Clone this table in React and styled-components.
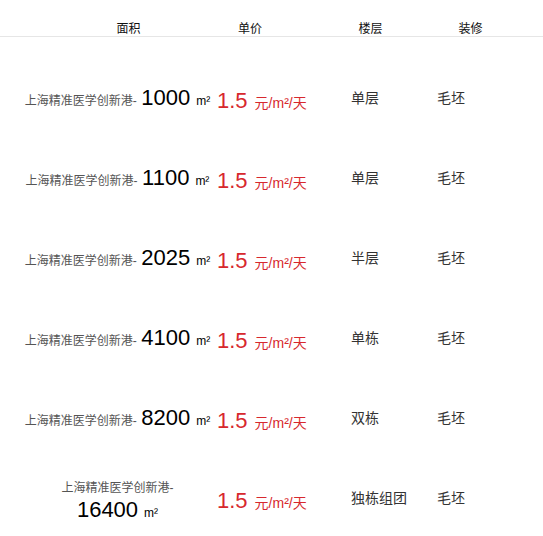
import React from "react";
import styled, { createGlobalStyle } from "styled-components";

const Global = createGlobalStyle`
  html, body { margin: 0; padding: 0; background: #fff; }
  body { font-family: "Liberation Sans", Arial, "Noto Sans CJK SC", sans-serif; }
`;

const Page = styled.div`
  width: 543px;
`;

const Header = styled.div`
  display: grid;
  grid-template-columns: 101px 142px 99px 101px;
  padding-left: 78px;
  height: 37px;
  box-sizing: border-box;
  border-bottom: 1px solid #e6e6e6;
`;

const HeadCell = styled.div`
  text-align: center;
  font-size: 12px;
  line-height: 12px;
  color: #111;
  padding-top: 23px;
`;

const List = styled.div`
  margin-top: 21px;
`;

const Row = styled.div`
  display: grid;
  grid-template-columns: 194px 134px 86px auto;
  padding-left: 23px;
  height: 80px;
  align-items: center;
`;

const AreaCell = styled.div`
  text-align: center;
  color: #000;
  margin-right: 5px;
  padding-top: ${(p) => (p.$wrap ? "6px" : "0")};
`;

const Name = styled.span`
  font-size: 12px;
  color: #555;
`;

const Big = styled.span`
  font-size: 22px;
  line-height: 28px;
`;

const Unit = styled.span`
  font-size: 12px;
  margin-left: 6px;
`;

const PriceCell = styled.div`
  color: #d7282d;
  padding-top: 6px;
  white-space: nowrap;
`;

const PriceUnit = styled.span`
  font-size: 14px;
  margin-left: 7px;
`;

const Text = styled.div`
  font-size: 14px;
  color: #333;
  line-height: 20px;
`;

const rows = [
  { area: "1000", floor: "单层" },
  { area: "1100", floor: "单层" },
  { area: "2025", floor: "半层" },
  { area: "4100", floor: "单栋" },
  { area: "8200", floor: "双栋" },
  { area: "16400", floor: "独栋组团", wrap: true },
];

export default function App() {
  return (
    <Page>
      <Global />
      <Header>
        <HeadCell>面积</HeadCell>
        <HeadCell>单价</HeadCell>
        <HeadCell>楼层</HeadCell>
        <HeadCell>装修</HeadCell>
      </Header>
      <List>
        {rows.map((r) => (
          <Row key={r.area}>
            <AreaCell $wrap={r.wrap}>
              <Name>上海精准医学创新港-</Name>{" "}
              <Big>{r.area}</Big>
              <Unit>m²</Unit>
            </AreaCell>
            <PriceCell>
              <Big>1.5</Big>
              <PriceUnit>元/m²/天</PriceUnit>
            </PriceCell>
            <Text>{r.floor}</Text>
            <Text>毛坯</Text>
          </Row>
        ))}
      </List>
    </Page>
  );
}
